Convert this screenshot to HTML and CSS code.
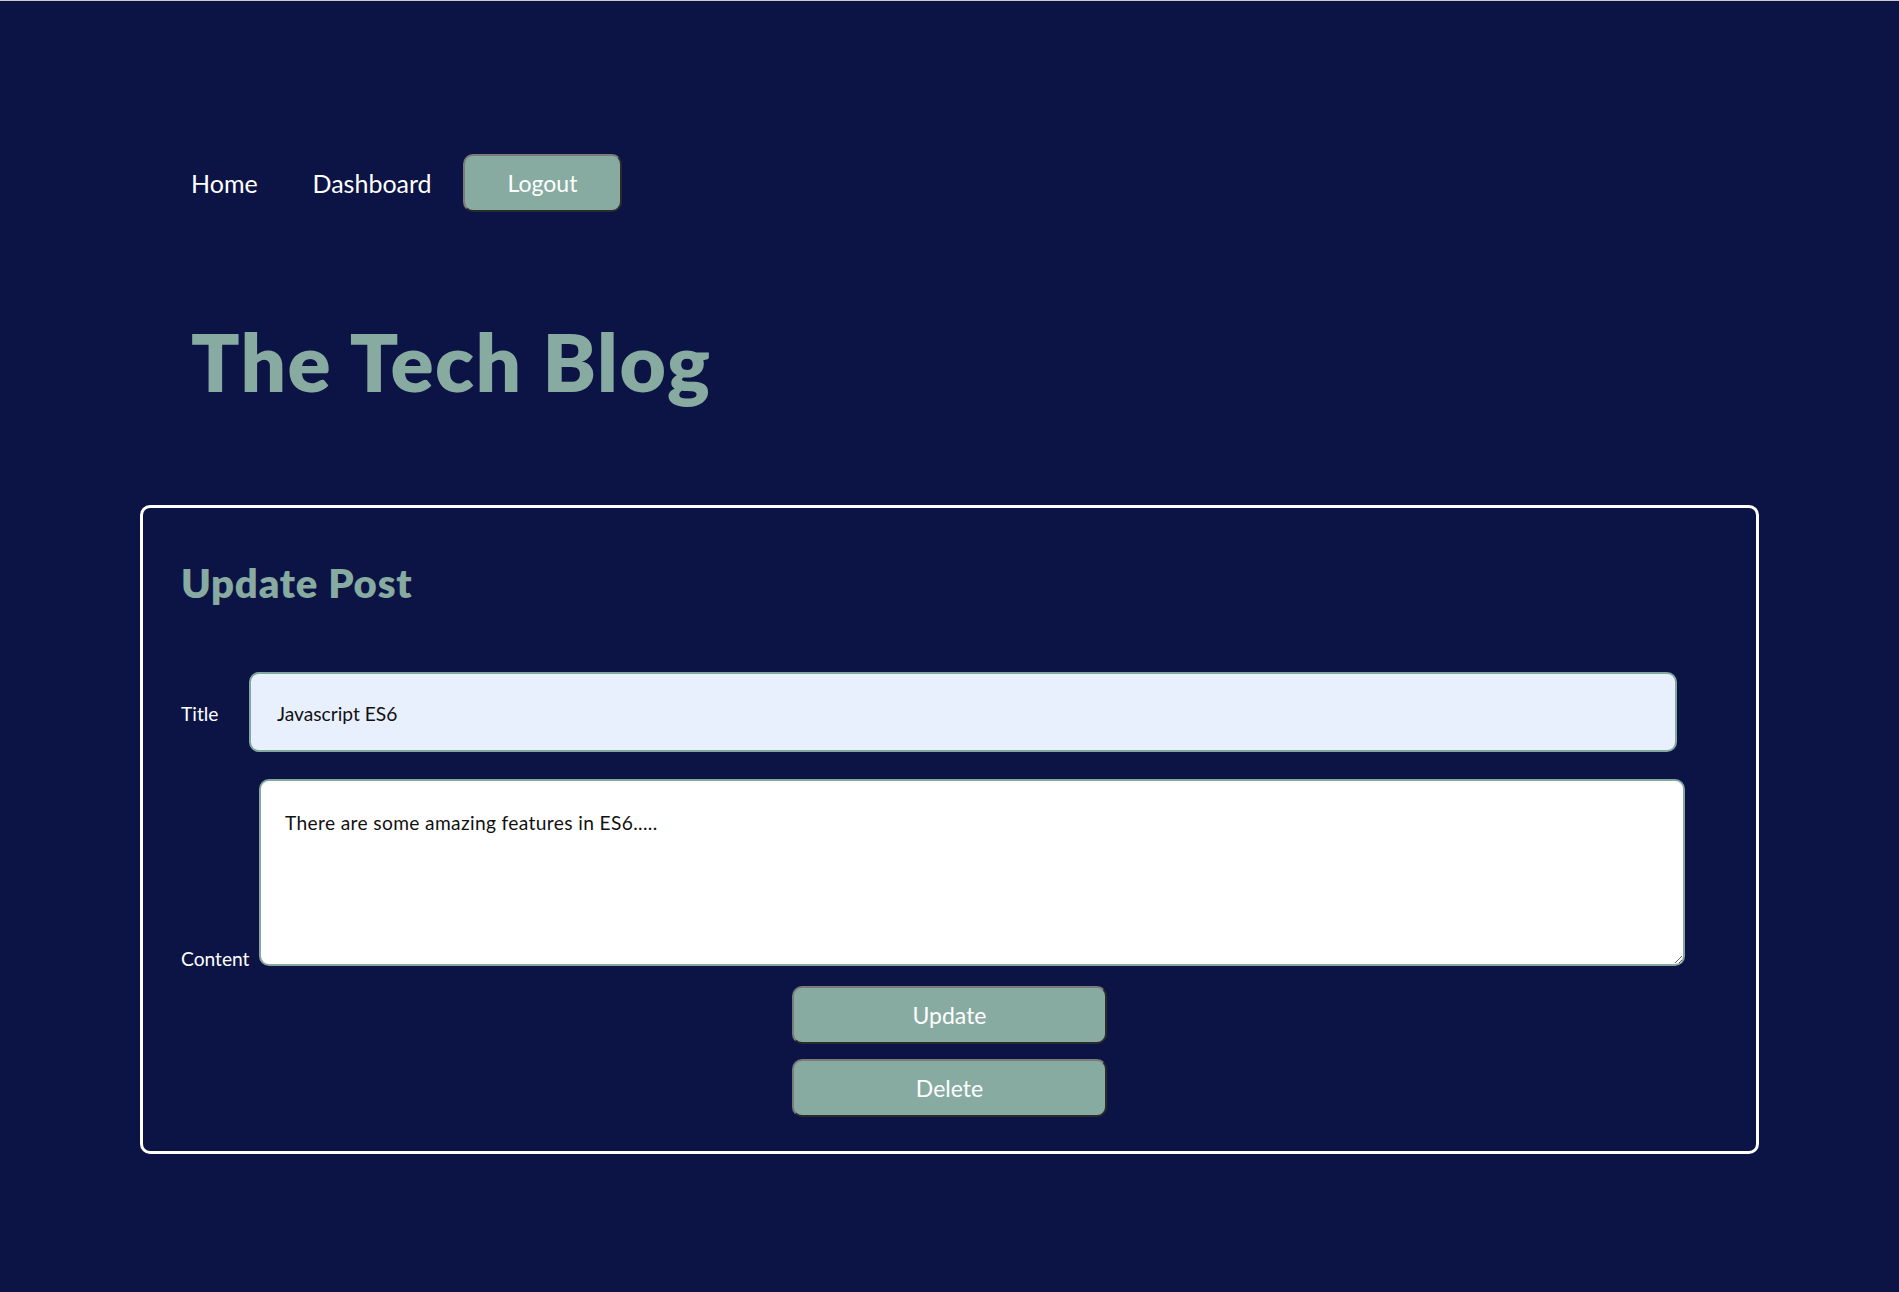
FILE: index.html
```html
<!DOCTYPE html>
<html lang="en">
<head>
<meta charset="utf-8">
<title>The Tech Blog</title>
<link rel="stylesheet" href="styles.css">
</head>
<body>
<header class="site-header">
  <nav class="nav">
    <a class="nav-link nav-home" href="#">Home</a>
    <a class="nav-link nav-dash" href="#">Dashboard</a>
    <button class="btn btn-logout" type="button">Logout</button>
  </nav>
  <h1 class="site-title">The Tech Blog</h1>
</header>
<main class="card">
  <h2 class="card-title">Update Post</h2>
  <form class="post-form">
    <div class="row"><label class="lbl lbl-title" for="title">Title</label><input class="field-input" id="title" type="text" value="Javascript ES6"></div>
    <div class="row row-content"><label class="lbl lbl-content" for="content">Content</label><textarea class="field-textarea" id="content">There are some amazing features in ES6.....</textarea></div>
    <button class="btn btn-wide btn-update" type="button">Update</button>
    <button class="btn btn-wide btn-delete" type="button">Delete</button>
  </form>
</main>
</body>
</html>
```

FILE: styles.css
```css
html {
  background: #0c1445;
}
body {
  margin: 0;
  min-height: 1291px;
  border-top: 1px solid #c9c9cf;
  background: #0c1445;
  font-family: Lato, "Open Sans", sans-serif;
  color: #ffffff;
}
.site-header {
  padding: 153px 0 0 191px;
}
.nav {
  display: flex;
  align-items: center;
  height: 58px;
}
.nav-link {
  color: #ffffff;
  text-decoration: none;
  font-size: 25px;
  line-height: 30px;
}
.nav-home {
  width: 121.5px;
}
.nav-dash {
  width: 150.5px;
}
.btn {
  box-sizing: border-box;
  height: 58px;
  background: #87aba1;
  color: #ffffff;
  font-family: Lato, "Open Sans", sans-serif;
  font-size: 23px;
  border-width: 2px;
  border-style: solid;
  border-color: #7b7b7b #2a2a2a #2a2a2a #7b7b7b;
  border-radius: 10px;
  padding: 0;
  cursor: pointer;
}
.btn-logout {
  width: 159px;
}
.site-title {
  margin: 101px 0 0 0;
  font-size: 80px;
  line-height: 96px;
  font-weight: 800;
  letter-spacing: 1.5px;
  color: #87aba1;
}
.card {
  display: block;
  margin: 96px 140px 0;
  border: 3px solid #ffffff;
  border-radius: 10px;
  padding: 51px 38px 34px;
}
.card-title {
  margin: 0;
  font-size: 40px;
  line-height: 48px;
  font-weight: 800;
  letter-spacing: 0.8px;
  color: #87aba1;
}
.post-form {
  margin-top: 65px;
}
.row {
  font-size: 19.2px;
}
.row-content {
  margin-top: 27px;
}
.lbl {
  display: inline-block;
  color: #ffffff;
}
.lbl-title {
  width: 68px;
}
.lbl-content {
  width: 78px;
}
.field-input {
  box-sizing: border-box;
  width: 1428px;
  height: 80px;
  margin: 0;
  padding: 3px 26px 0;
  border: 2px solid #84a89e;
  border-radius: 10px;
  background: #e8f0fe;
  color: #111111;
  font-family: Lato, "Open Sans", sans-serif;
  font-size: 19.2px;
  outline: none;
}
.field-textarea {
  box-sizing: border-box;
  width: 1426px;
  height: 187px;
  margin: 0;
  padding: 30px 24px 24px;
  border: 2px solid #84a89e;
  border-radius: 10px;
  background: #ffffff;
  color: #111111;
  font-family: Lato, "Open Sans", sans-serif;
  font-size: 19.2px;
  letter-spacing: 0.35px;
  vertical-align: baseline;
  outline: none;
}
.btn-wide {
  display: block;
  width: 315px;
  margin: 16px auto 0;
}
.btn-delete {
  margin-top: 15px;
}
```
